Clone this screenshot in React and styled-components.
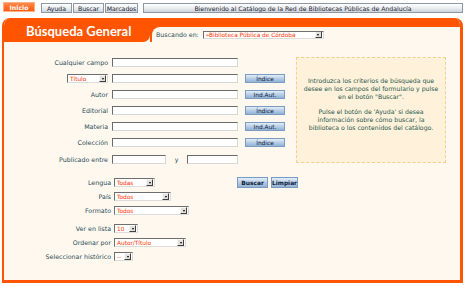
import React from "react";
import styled, { createGlobalStyle } from "styled-components";

const ORANGE = "#ff5400";
const CREAM = "#fff8ee";
const TEAL = "#1f4d5a";
const RED = "#ff3000";

const Global = createGlobalStyle`
  html, body {
    margin: 0;
    padding: 0;
    background: #fff;
    width: 466px;
    height: 286px;
    overflow: hidden;
  }
  body {
    font-family: "DejaVu Sans", Verdana, sans-serif;
  }
  * { box-sizing: border-box; }
`;

const TopBar = styled.div`
  display: flex;
  align-items: flex-start;
  height: 18px;
  padding: 2px 3px 0 3px;
`;

const NavButton = styled.div`
  height: 10px;
  margin-top: ${(p) => (p.$home ? "0" : "1px")};
  margin-right: ${(p) => (p.$home ? "6px" : "1px")};
  width: ${(p) => p.$w}px;
  display: flex;
  align-items: center;
  justify-content: center;
  font-size: 6.2px;
  font-weight: ${(p) => (p.$home ? "bold" : "normal")};
  color: ${(p) => (p.$home ? "#fff" : "#1b2330")};
  background: ${(p) =>
    p.$home
      ? "linear-gradient(#ff8a4a, #ff5a10)"
      : "linear-gradient(#ffffff, #e8ecf0 55%, #cdd3da)"};
  border: 1px solid ${(p) => (p.$home ? "#ffb080" : "#8d98a6")};
  white-space: nowrap;
`;

const Welcome = styled(NavButton)`
  flex: 1;
  margin-left: 4px;
  margin-right: 0;
`;

const Panel = styled.div`
  margin: 0 3px 0 2px;
  height: 265px;
  background: ${CREAM};
  border: 3px solid ${ORANGE};
  border-left-width: 2px;
  border-top: 0;
  border-radius: 8px 8px 0 0;
  overflow: hidden;
  display: flex;
  flex-direction: column;
`;

const Header = styled.div`
  display: flex;
  height: 24px;
  background: ${CREAM};
`;

const TitleTab = styled.div`
  width: 146px;
  background: ${ORANGE};
  border-bottom-right-radius: 7px;
  color: #fff;
  font-family: Lato, "DejaVu Sans", sans-serif;
  font-weight: bold;
  font-size: 13px;
  padding: 5px 0 0 22px;
  white-space: nowrap;
`;

const SearchArea = styled.div`
  flex: 1;
  display: flex;
  background: ${ORANGE};
`;

const SearchTab = styled.div`
  flex: 1;
  margin: 9px 0 0 2px;
  background: ${CREAM};
  border-top-left-radius: 8px;
  display: flex;
  align-items: center;
  padding: 0 0 0 4px;
  gap: 4px;
`;

const Label = styled.span`
  color: ${TEAL};
  font-size: 6.3px;
  white-space: nowrap;
  text-align: right;
  align-self: center;
`;

const SelectBox = styled.div`
  width: ${(p) => p.$w}px;
  height: ${(p) => p.$h || 9}px;
  background: #fff;
  border: 1px solid;
  border-color: #6f6f6f #dcdcdc #dcdcdc #6f6f6f;
  display: flex;
  align-items: center;
  justify-content: space-between;
  padding: 0 1px 0 2px;
  color: ${RED};
  font-size: 5.8px;
  white-space: nowrap;
  overflow: hidden;
`;

const Arrow = styled.span`
  width: 7px;
  height: 7px;
  flex: none;
  background: #e4e1dc;
  border: 1px solid;
  border-color: #f7f7f7 #404040 #404040 #f7f7f7;
  display: flex;
  align-items: center;
  justify-content: center;
  &::after {
    content: "";
    border-left: 1.5px solid transparent;
    border-right: 1.5px solid transparent;
    border-top: 2px solid #000;
  }
`;

function Select({ w, h, children }) {
  return (
    <SelectBox $w={w} $h={h}>
      <span>{children}</span>
      <Arrow />
    </SelectBox>
  );
}

const Body = styled.div`
  flex: 1;
  display: flex;
  flex-direction: column;
  padding: 15px 0 0 0;
`;

const Upper = styled.div`
  display: flex;
  align-items: flex-start;
`;

const UpperForm = styled.div`
  margin-top: 1px;
  display: grid;
  grid-template-columns: 104px 126px 40px;
  grid-auto-rows: 9px;
  column-gap: 4px;
  row-gap: 7.1px;
  & > :nth-child(3n + 3) {
    margin-left: 3px;
  }
`;

const LabelCell = styled.div`
  display: flex;
  justify-content: flex-end;
  align-items: center;
`;

const Input = styled.div`
  height: 9px;
  width: ${(p) => (p.$w ? `${p.$w}px` : "auto")};
  flex: ${(p) => (p.$w ? "none" : "1")};
  background: #fff;
  border: 1px solid;
  border-color: #6a6a6a #d8d8d8 #d8d8d8 #6a6a6a;
`;

const Range = styled.div`
  display: flex;
  align-items: center;
`;

const And = styled(Label)`
  width: 21px;
  text-align: center;
`;

const IndexButton = styled.div`
  height: 9px;
  width: 40px;
  display: flex;
  align-items: center;
  justify-content: center;
  font-size: 5.9px;
  color: #0b1c3a;
  background: linear-gradient(#e4eef8, #b7cde6 50%, #93b2d6);
  border: 1px solid #7b9bc2;
  white-space: nowrap;
`;

const InfoBox = styled.div`
  margin-left: 14px;
  width: 150px;
  height: 106px;
  background: #fff1da;
  border: 1px dashed #f6cf90;
  display: flex;
  flex-direction: column;
  justify-content: center;
  gap: 7px;
  padding-bottom: 12px;
  color: #24584e;
  font-size: 6.2px;
  line-height: 8px;
  text-align: center;
  white-space: nowrap;
`;

const Lower = styled.div`
  margin-top: 14.5px;
  display: grid;
  grid-template-columns: 107px 120px auto;
  column-gap: 3px;
  grid-auto-rows: 9px;
  row-gap: 5px;
`;

const ListOptions = styled(Lower)`
  margin-top: 9px;
  row-gap: 5px;
`;

const Actions = styled.div`
  display: flex;
  gap: 3px;
  margin-top: -1px;
  height: 11px;
`;

const ActionButton = styled(IndexButton)`
  width: ${(p) => p.$w}px;
  height: 11px;
  font-weight: bold;
`;

export default function App() {
  return (
    <>
      <Global />
      <TopBar>
        <NavButton $home $w={32}>Inicio</NavButton>
        <NavButton $w={31}>Ayuda</NavButton>
        <NavButton $w={31}>Buscar</NavButton>
        <NavButton $w={33}>Marcados</NavButton>
        <Welcome>Bienvenido al Catálogo de la Red de Bibliotecas Públicas de Andalucía</Welcome>
      </TopBar>
      <Panel>
        <Header>
          <TitleTab>Búsqueda General</TitleTab>
          <SearchArea>
            <SearchTab>
              <Label>Buscando en:</Label>
              <Select w={121} h={8}>»Biblioteca Pública de Córdoba</Select>
            </SearchTab>
          </SearchArea>
        </Header>
        <Body>
          <Upper>
            <UpperForm>
              <LabelCell><Label>Cualquier campo</Label></LabelCell>
              <Input />
              <span />

              <LabelCell><Select w={41}>Título</Select></LabelCell>
              <Input />
              <IndexButton>Índice</IndexButton>

              <LabelCell><Label>Autor</Label></LabelCell>
              <Input />
              <IndexButton>Ind.Aut.</IndexButton>

              <LabelCell><Label>Editorial</Label></LabelCell>
              <Input />
              <IndexButton>Índice</IndexButton>

              <LabelCell><Label>Materia</Label></LabelCell>
              <Input />
              <IndexButton>Ind.Aut.</IndexButton>

              <LabelCell><Label>Colección</Label></LabelCell>
              <Input />
              <IndexButton>Índice</IndexButton>

              <LabelCell><Label>Publicado entre</Label></LabelCell>
              <Range>
                <Input $w={54} />
                <And>y</And>
                <Input />
              </Range>
              <span />
            </UpperForm>
            <InfoBox>
              <div>
                Introduzca los criterios de búsqueda que<br />
                desee en los campos del formulario y pulse<br />
                en el botón "Buscar".
              </div>
              <div>
                Pulse el botón de 'Ayuda' si desea<br />
                información sobre cómo buscar, la<br />
                biblioteca o los contenidos del catálogo.
              </div>
            </InfoBox>
          </Upper>
          <Lower>
            <LabelCell><Label>Lengua</Label></LabelCell>
            <Select w={41}>Todas</Select>
            <Actions>
              <ActionButton $w={31}>Buscar</ActionButton>
              <ActionButton $w={27}>Limpiar</ActionButton>
            </Actions>

            <LabelCell><Label>País</Label></LabelCell>
            <Select w={57}>Todos</Select>
            <span />

            <LabelCell><Label>Formato</Label></LabelCell>
            <Select w={75}>Todos</Select>
            <span />
          </Lower>
          <ListOptions>
            <LabelCell><Label>Ver en lista</Label></LabelCell>
            <Select w={24}>10</Select>
            <span />

            <LabelCell><Label>Ordenar por</Label></LabelCell>
            <Select w={72}>Autor/Título</Select>
            <span />

            <LabelCell><Label>Seleccionar histórico</Label></LabelCell>
            <Select w={19}>--</Select>
            <span />
          </ListOptions>
        </Body>
      </Panel>
    </>
  );
}
